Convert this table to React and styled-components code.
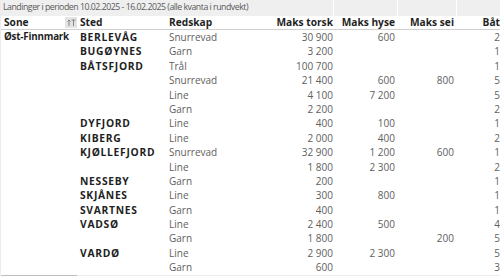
import React from 'react';
import styled, { createGlobalStyle } from 'styled-components';

const GlobalStyle = createGlobalStyle`
  html, body {
    margin: 0;
    padding: 0;
    background: #ffffff;
  }
  body {
    font-family: "Open Sans", "Liberation Sans", sans-serif;
    width: 500px;
    height: 276px;
    overflow: hidden;
  }
`;

const COLS = '76px 89px 105px 64px 63px 59px 44px';

const Visual = styled.div`
  width: 500px;
  height: 276px;
  display: flex;
  flex-direction: column;
  border-left: 1px solid #ececec;
  box-sizing: border-box;
`;

const TitleRow = styled.div`
  display: grid;
  grid-template-columns: 332px 63px 58px 1fr;
  column-gap: 1px;
  height: 16px;
  background: #ffffff;
`;

const TitleCell = styled.div`
  background: #efefef;
  color: #5a5a5a;
  font-size: 8.8px;
  letter-spacing: -0.5px;
  line-height: 15px;
  padding-left: 2px;
  white-space: nowrap;
  overflow: hidden;
`;

const HeaderRow = styled.div`
  display: grid;
  grid-template-columns: ${COLS};
  height: 13px;
  border-bottom: 1.5px solid #cfcfcf;
`;

const HeaderCell = styled.div`
  display: flex;
  align-items: center;
  justify-content: ${({ $num }) => ($num ? 'flex-end' : 'space-between')};
  padding: ${({ $pad }) => $pad || '0 2px 0 3px'};
  font-size: 10.2px;
  font-weight: 700;
  color: #1f1f1f;
  line-height: 13px;
  white-space: nowrap;
`;

const SortBox = styled.span`
  width: 12px;
  height: 11px;
  background: #e4e4e4;
  display: flex;
  align-items: center;
  justify-content: center;
`;

const Body = styled.div`
  flex: 1;
  display: flex;
  flex-direction: column;
`;

const Row = styled.div`
  display: grid;
  grid-template-columns: ${COLS};
  height: 14.4px;
`;

const Cell = styled.div`
  font-size: 10px;
  line-height: 14.4px;
  white-space: nowrap;
  overflow: hidden;
  padding: ${({ $pad }) => $pad || '0 0 0 3px'};
  text-align: ${({ $num }) => ($num ? 'right' : 'left')};
  color: #606060;
`;

const ZoneCell = styled(Cell)`
  font-size: 9.8px;
  letter-spacing: -0.2px;
  font-weight: 700;
  color: #1f1f1f;
`;

const PlaceCell = styled(Cell)`
  font-size: 10.3px;
  font-weight: 700;
  letter-spacing: 0.7px;
  color: #1f1f1f;
`;

const Footer = styled.div`
  display: flex;
  height: 1px;
  background: #ececec;
`;

const Thumb = styled.div`
  width: 76px;
  background: #bdbdbd;
`;

const SortIcon = () => (
  <svg width="9" height="7" viewBox="0 0 9 7">
    <path d="M2 7V1M0.5 2.5L2 1l1.5 1.5" stroke="#7a7a7a" strokeWidth="0.9" fill="none" />
    <path d="M4.5 1h4M6.5 1v6" stroke="#7a7a7a" strokeWidth="0.9" fill="none" />
  </svg>
);

const rows = [
  ['Øst-Finnmark', 'BERLEVÅG', 'Snurrevad', '30 900', '600', '', '2'],
  ['', 'BUGØYNES', 'Garn', '3 200', '', '', '1'],
  ['', 'BÅTSFJORD', 'Trål', '100 700', '', '', '1'],
  ['', '', 'Snurrevad', '21 400', '600', '800', '5'],
  ['', '', 'Line', '4 100', '7 200', '', '5'],
  ['', '', 'Garn', '2 200', '', '', '2'],
  ['', 'DYFJORD', 'Line', '400', '100', '', '1'],
  ['', 'KIBERG', 'Line', '2 000', '400', '', '2'],
  ['', 'KJØLLEFJORD', 'Snurrevad', '32 900', '1 200', '600', '1'],
  ['', '', 'Line', '1 800', '2 300', '', '2'],
  ['', 'NESSEBY', 'Garn', '200', '', '', '1'],
  ['', 'SKJÅNES', 'Line', '300', '800', '', '1'],
  ['', 'SVARTNES', 'Garn', '400', '', '', '1'],
  ['', 'VADSØ', 'Line', '2 400', '500', '', '4'],
  ['', '', 'Garn', '1 800', '', '200', '5'],
  ['', 'VARDØ', 'Line', '2 900', '2 300', '', '5'],
  ['', '', 'Garn', '600', '', '', '3'],
];

export default function App() {
  return (
    <>
      <GlobalStyle />
      <Visual>
        <TitleRow>
          <TitleCell>Landinger i perioden 10.02.2025 - 16.02.2025 (alle kvanta i rundvekt)</TitleCell>
          <TitleCell />
          <TitleCell />
          <TitleCell />
        </TitleRow>
        <HeaderRow>
          <HeaderCell $pad="0 0 0 3px">
            Sone
            <SortBox>
              <SortIcon />
            </SortBox>
          </HeaderCell>
          <HeaderCell>Sted</HeaderCell>
          <HeaderCell>Redskap</HeaderCell>
          <HeaderCell $num>Maks torsk</HeaderCell>
          <HeaderCell $num $pad="0 3px 0 0">Maks hyse</HeaderCell>
          <HeaderCell $num $pad="0 3px 0 0">Maks sei</HeaderCell>
          <HeaderCell $num $pad="0 1px 0 0">Båt</HeaderCell>
        </HeaderRow>
        <Body>
          {rows.map((r, i) => (
            <Row key={i}>
              <ZoneCell>{r[0]}</ZoneCell>
              <PlaceCell>{r[1]}</PlaceCell>
              <Cell>{r[2]}</Cell>
              <Cell $num $pad="0 2px 0 0">{r[3]}</Cell>
              <Cell $num $pad="0 3px 0 0">{r[4]}</Cell>
              <Cell $num $pad="0 3px 0 0">{r[5]}</Cell>
              <Cell $num $pad="0 1px 0 0">{r[6]}</Cell>
            </Row>
          ))}
        </Body>
        <Footer>
          <Thumb />
        </Footer>
      </Visual>
    </>
  );
}
